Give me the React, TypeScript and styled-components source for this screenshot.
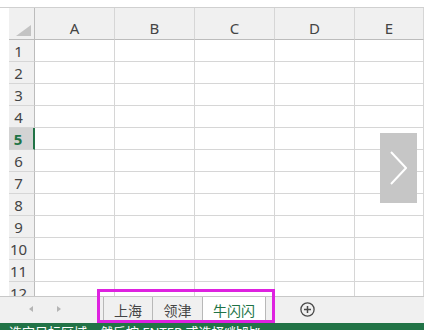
import React from 'react';
import styled, { createGlobalStyle } from 'styled-components';

const GlobalStyle = createGlobalStyle`
    html, body {
        margin: 0;
        padding: 0;
        background: #fff;
    }
`;

const COLUMNS = ['A', 'B', 'C', 'D', 'E'];
const ROWS = [1, 2, 3, 4, 5, 6, 7, 8, 9, 10, 11, 12];
const ACTIVE_ROW = 5;
const SHEETS = [
    { name: '上海', width: 49 },
    { name: '领津', width: 50 },
    { name: '牛闪闪', width: 63, active: true },
];

const Window = styled.div`
    position: relative;
    width: 424px;
    height: 330px;
    overflow: hidden;
    display: flex;
    flex-direction: column;
    background: #fff;
    font-family: "Noto Sans", "Noto Sans CJK SC", sans-serif;
`;

const TopEdge = styled.div`
    flex: none;
    height: 7px;
    border-bottom: 1px solid #d0d0d0;
`;

const SheetArea = styled.div`
    flex: 1;
    min-height: 0;
    display: flex;
    overflow: hidden;
    padding-left: 9px;
`;

const Grid = styled.div`
    flex: 1;
    display: grid;
    grid-template-columns: 26px repeat(4, 80px) 1fr;
    grid-template-rows: 32px;
    grid-auto-rows: 22px;
`;

const Corner = styled.div`
    background: #f0f0f0;
    border-right: 1px solid #bcbcbc;
    border-bottom: 1px solid #bcbcbc;
    display: flex;
    align-items: flex-end;
    justify-content: flex-end;
    padding: 0 3px 3px 0;
    box-sizing: border-box;
`;

const ColHeader = styled.div`
    background: #f0f0f0;
    border-right: 1px solid #d6d6d6;
    border-bottom: 1px solid #bcbcbc;
    box-sizing: border-box;
    display: flex;
    align-items: flex-end;
    justify-content: center;
    padding-bottom: 1px;
    font-size: 15px;
    line-height: 20px;
    color: #444;
`;

const RowHeader = styled.div<{ $active?: boolean }>`
    background: ${p => (p.$active ? '#d3d3d3' : '#f0f0f0')};
    border-right: ${p => (p.$active ? '2px solid #217346' : '1px solid #bcbcbc')};
    border-bottom: 1px solid #d6d6d6;
    box-sizing: border-box;
    display: flex;
    align-items: center;
    justify-content: center;
    padding-right: 6px;
    font-size: 15px;
    font-weight: ${p => (p.$active ? 700 : 400)};
    color: ${p => (p.$active ? '#217346' : '#444')};
`;

const Cell = styled.div`
    border-right: 1px solid #d6d6d6;
    border-bottom: 1px solid #d6d6d6;
    box-sizing: border-box;
    background: #fff;
`;

const TabBar = styled.div`
    flex: none;
    height: 27px;
    box-sizing: border-box;
    background: #f0f0f0;
    border-top: 1px solid #c8c8c8;
    display: flex;
    align-items: stretch;
    padding-bottom: 2px;
`;

const NavArea = styled.div`
    width: 103px;
    display: flex;
    align-items: center;
    padding-left: 29px;
    gap: 24px;
    box-sizing: border-box;
`;

const NavArrow = styled.span<{ $dir: 'left' | 'right' }>`
    width: 0;
    height: 0;
    border-top: 3.5px solid transparent;
    border-bottom: 3.5px solid transparent;
    ${p => (p.$dir === 'left' ? 'border-right: 4px solid #b4b4b4;' : 'border-left: 4px solid #b4b4b4;')}
`;

const Tabs = styled.div`
    display: flex;
    align-items: stretch;
    border-left: 1px solid #b8b8b8;
`;

const Tab = styled.div<{ $active?: boolean; $width: number }>`
    width: ${p => p.$width}px;
    box-sizing: border-box;
    display: flex;
    align-items: center;
    justify-content: center;
    font-size: 14px;
    padding-top: 1px;
    color: ${p => (p.$active ? '#217346' : '#444')};
    background: ${p => (p.$active ? '#fff' : 'transparent')};
    border-right: 1px solid #b8b8b8;
    box-shadow: ${p => (p.$active ? '0 1px 0 #c8c8c8' : 'none')};
`;

const AddSheet = styled.div`
    margin-left: 34px;
    display: flex;
    align-items: center;
`;

const StatusBar = styled.div`
    flex: none;
    height: 7px;
    overflow: hidden;
    background: #217346;
    color: #fff;
    font-size: 13px;
    line-height: 16px;
    padding: 1px 0 0 9px;
    box-sizing: border-box;
    white-space: nowrap;
`;

const Highlight = styled.div`
    position: absolute;
    left: 97px;
    top: 289px;
    width: 178px;
    height: 34px;
    box-sizing: border-box;
    border: 3px solid #de22e0;
    pointer-events: none;
`;

const NextButton = styled.div`
    position: absolute;
    left: 380px;
    top: 133px;
    width: 37px;
    height: 70px;
    background: #c6c6c6;
    display: flex;
    align-items: center;
    justify-content: center;
`;

export default function App() {
    return (
        <>
            <GlobalStyle />
            <Window>
                <TopEdge />
                <SheetArea>
                    <Grid>
                        <Corner>
                            <svg width="15" height="11" viewBox="0 0 15 11">
                                <polygon points="15,0 15,11 0,11" fill="#c3c3c3" />
                            </svg>
                        </Corner>
                        {COLUMNS.map(c => (
                            <ColHeader key={c}>{c}</ColHeader>
                        ))}
                        {ROWS.map(r => (
                            <React.Fragment key={r}>
                                <RowHeader $active={r === ACTIVE_ROW}>{r}</RowHeader>
                                {COLUMNS.map(c => (
                                    <Cell key={c} />
                                ))}
                            </React.Fragment>
                        ))}
                    </Grid>
                </SheetArea>
                <TabBar>
                    <NavArea>
                        <NavArrow $dir="left" />
                        <NavArrow $dir="right" />
                    </NavArea>
                    <Tabs>
                        {SHEETS.map(s => (
                            <Tab key={s.name} $width={s.width} $active={s.active}>
                                {s.name}
                            </Tab>
                        ))}
                    </Tabs>
                    <AddSheet>
                        <svg width="15" height="15" viewBox="0 0 15 15">
                            <circle cx="7.5" cy="7.5" r="6.6" fill="none" stroke="#4a4a4a" strokeWidth="1.3" />
                            <path d="M7.5 4v7M4 7.5h7" stroke="#4a4a4a" strokeWidth="1.5" />
                        </svg>
                    </AddSheet>
                </TabBar>
                <StatusBar>选定目标区域，然后按 ENTER 或选择“粘贴”</StatusBar>
                <Highlight />
                <NextButton>
                    <svg width="17" height="34" viewBox="0 0 17 34">
                        <polyline points="1,1 16,17 1,33" fill="none" stroke="#fff" strokeWidth="2" />
                    </svg>
                </NextButton>
            </Window>
        </>
    );
}
